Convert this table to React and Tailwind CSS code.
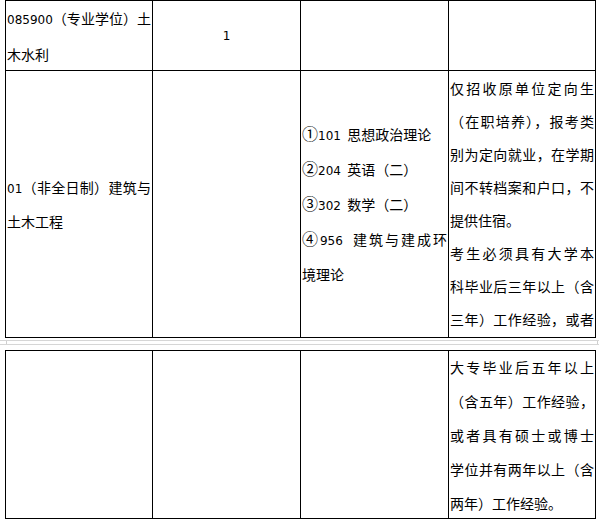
import React from "react";

const CJK = "font-['Noto_Sans_CJK_SC','Noto_Sans_CJK_JP',sans-serif]";

// a single visual line; full lines are stretched across the cell like Word's distributed text
const Line = ({ children, justify = false }) => (
  <div className={justify ? "text-justify [text-align-last:justify]" : "text-left"}>{children}</div>
);

const Num = ({ children }) => (
  <span className="font-['DejaVu_Sans',sans-serif] text-[12px]">{children}</span>
);

const Circled = ({ children }) => <span className="text-[16px] leading-none">{children}</span>;

const Cell = ({ children, className = "" }) => (
  <div className={`border-r border-b border-black px-px ${className}`}>{children}</div>
);

const App = () => {
  return (
    <div className={`w-[599px] h-[525px] bg-white text-black text-[14px] overflow-hidden ${CJK}`}>
      {/* upper table */}
      <div className="ml-[5px] w-[591px] border-l border-t border-black grid grid-cols-[147px_148px_148px_147px] grid-rows-[70px_267px]">
        <Cell className="flex flex-col justify-center leading-[34px]">
          <Line justify>
            <Num>085900</Num>（专业学位）土
          </Line>
          <Line>木水利</Line>
        </Cell>
        <Cell className="flex items-center justify-center">
          <Num>1</Num>
        </Cell>
        <Cell />
        <Cell />

        <Cell className="flex flex-col justify-center leading-[32px]">
          <Line justify>
            <Num>01</Num>（非全日制）建筑与
          </Line>
          <Line>土木工程</Line>
        </Cell>
        <Cell />
        <Cell className="flex flex-col justify-center leading-[33px]">
          <Line>
            <Circled>①</Circled>
            <Num>101</Num>&nbsp;&nbsp;思想政治理论
          </Line>
          <Line>
            <Circled>②</Circled>
            <Num>204</Num>&nbsp;&nbsp;英语（二）
          </Line>
          <Line>
            <Circled>③</Circled>
            <Num>302</Num>&nbsp;&nbsp;数学（二）
          </Line>
          <Line justify>
            <Circled>④</Circled>
            <Num>956</Num>&nbsp;&nbsp;建筑与建成环
          </Line>
          <Line>境理论</Line>
        </Cell>
        <Cell className="leading-[33px] pt-px">
          <Line justify>仅招收原单位定向生</Line>
          <Line justify>（在职培养），报考类</Line>
          <Line justify>别为定向就业，在学期</Line>
          <Line justify>间不转档案和户口，不</Line>
          <Line>提供住宿。</Line>
          <Line justify>考生必须具有大学本</Line>
          <Line justify>科毕业后三年以上（含</Line>
          <Line justify>三年）工作经验，或者</Line>
        </Cell>
      </div>

      {/* page break strip */}
      <div className="h-[12px] pt-[2px]">
        <div className="h-[5px] border-y border-[#d6d6d6] flex justify-between">
          <div className="ml-[6px] w-px h-full bg-[#cfcfcf]" />
          <div className="mr-px w-px h-full bg-[#cfcfcf]" />
        </div>
      </div>

      {/* lower table */}
      <div className="ml-[5px] w-[591px] border-l border-t border-black grid grid-cols-[147px_148px_148px_147px] grid-rows-[168px]">
        <Cell />
        <Cell />
        <Cell />
        <Cell className="flex flex-col justify-center leading-[34px]">
          <Line justify>大专毕业后五年以上</Line>
          <Line justify>（含五年）工作经验，</Line>
          <Line justify>或者具有硕士或博士</Line>
          <Line justify>学位并有两年以上（含</Line>
          <Line>两年）工作经验。</Line>
        </Cell>
      </div>
    </div>
  );
};

export default App;
